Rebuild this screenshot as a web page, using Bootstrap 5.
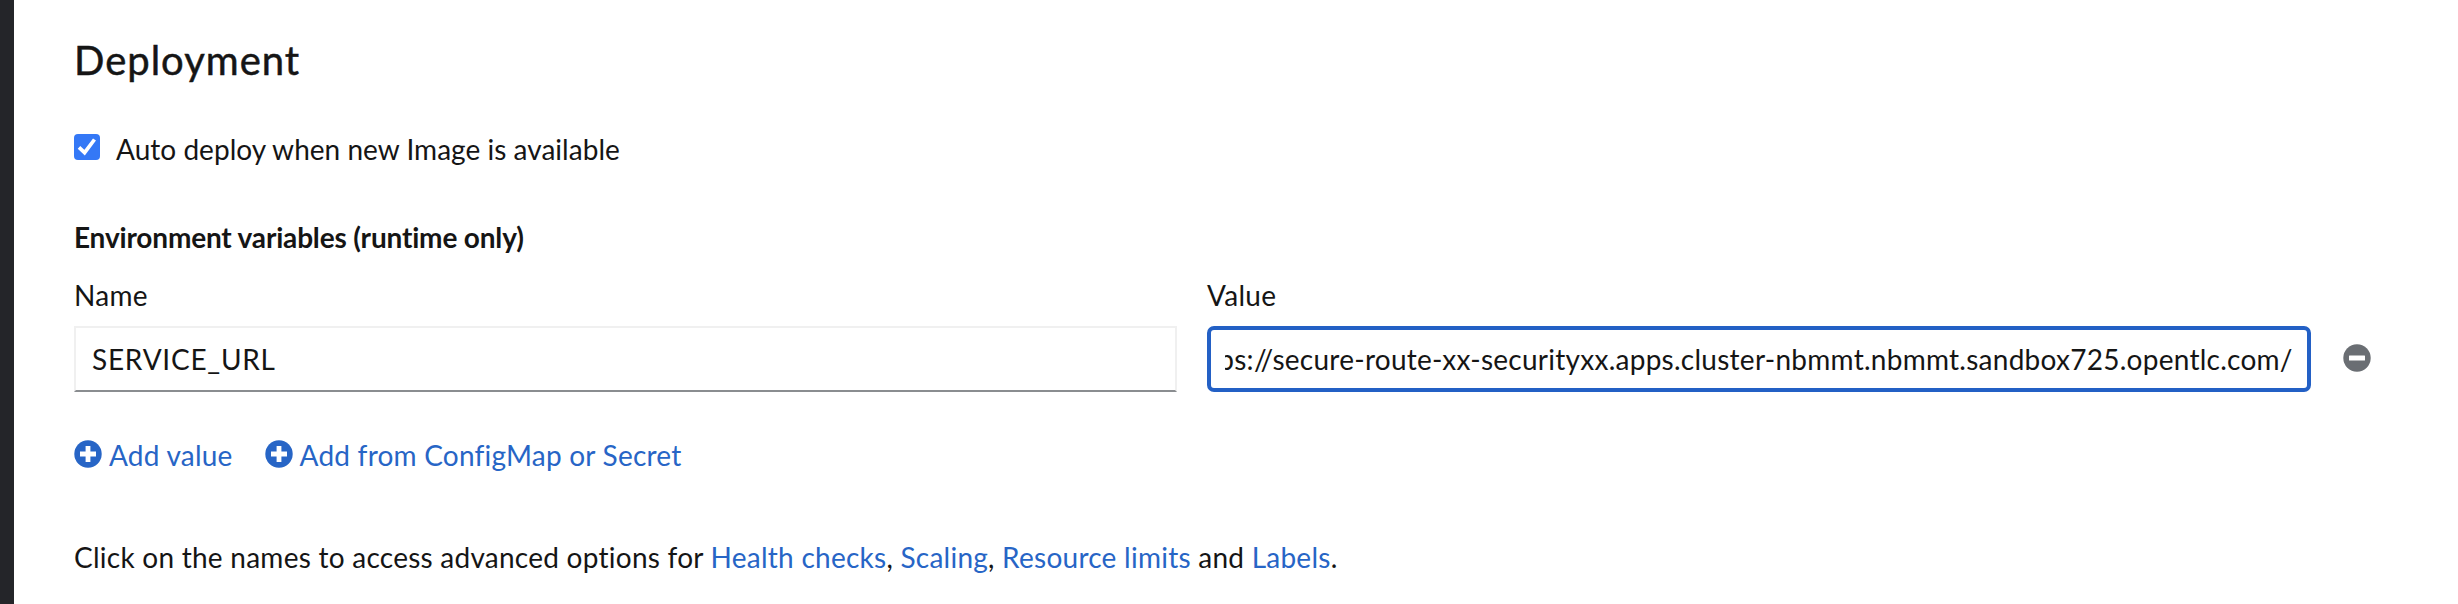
<!DOCTYPE html>
<html lang="en">
<head>
<meta charset="utf-8">
<title>Deployment</title>
<link href="https://cdn.jsdelivr.net/npm/bootstrap@5.3.0/dist/css/bootstrap.min.css" rel="stylesheet">
<style>
  body { font-family: Lato, "Open Sans", sans-serif; font-size: 28px; line-height: 42px; color: #151515; background: #fff; }
  .side-edge { width: 14px; background: #242529; }
  .form-area { padding: 34px 0 0 60px; }
  .page-title { font-size: 40px; line-height: 52px; font-weight: 400; letter-spacing: 1px; -webkit-text-stroke: .5px #151515; margin-bottom: 42px; }
  .auto-row { gap: 16px; margin-bottom: 46px; letter-spacing: .03px; }
  .auto-row .form-check-input { width: 26px; height: 26px; border-radius: 4px; margin: 6px 0 0; border: 0; float: none; }
  .auto-row .form-check-input:checked { background-color: #3478f6; background-size: 26px 26px; background-image: url("data:image/svg+xml,%3Csvg xmlns='http://www.w3.org/2000/svg' viewBox='0 0 26 26'%3E%3Cpath d='M5 13.4l5.6 5.3L20.5 5.5' fill='none' stroke='%23fff' stroke-width='3.7'/%3E%3C/svg%3E"); }
  .env-title { font-size: 28px; line-height: 42px; font-weight: 700; letter-spacing: -.17px; margin-bottom: 16px; }
  .env-grid { display: grid; grid-template-columns: 1103px 1104px auto; column-gap: 30px; margin-bottom: 42px; }
  .env-grid label { margin-bottom: 10px; letter-spacing: .3px; }
  .env-grid .form-control { height: 66px; padding: 11px 16px; font-size: 28px; line-height: 40px; color: #151515; border: 2px solid #f0f0f0; border-bottom-color: #8a8d90; border-radius: 0; box-shadow: none; }
  #env-name { letter-spacing: .75px; }
  .env-grid .is-active { border: 4px solid #2360c5; border-radius: 7px; padding: 9px 14px; letter-spacing: .26px; }
  .remove-btn { align-self: end; width: 28px; height: 28px; margin: 0 0 20px 2px; }
  .remove-btn svg, .action svg { display: block; width: 28px; height: 28px; flex: none; }
  .action { color: #2765c6; gap: 7px; letter-spacing: .22px; }
  .action svg { margin-top: -3px; }
  .actions { gap: 32px; margin-bottom: 60px; }
  .hint { letter-spacing: .25px; }
  .hint a { color: #2765c6; }
</style>
<script src="https://cdn.jsdelivr.net/npm/bootstrap@5.3.0/dist/js/bootstrap.bundle.min.js"></script>
</head>
<body class="vh-100 overflow-hidden">
<div class="d-flex h-100">
  <aside class="side-edge flex-shrink-0"></aside>
  <main class="form-area flex-grow-1">
    <h1 class="page-title">Deployment</h1>

    <div class="auto-row d-flex align-items-start">
      <input class="form-check-input" type="checkbox" id="auto" checked>
      <label for="auto">Auto deploy when new Image is available</label>
    </div>

    <h2 class="env-title">Environment variables (runtime only)</h2>
    <div class="env-grid">
      <div>
        <label class="d-block" for="env-name">Name</label>
        <input class="form-control" id="env-name" type="text" value="SERVICE_URL">
      </div>
      <div>
        <label class="d-block" for="env-value">Value</label>
        <input class="form-control is-active" id="env-value" type="text" spellcheck="false" value="https://secure-route-xx-securityxx.apps.cluster-nbmmt.nbmmt.sandbox725.opentlc.com/">
      </div>
      <button class="remove-btn border-0 bg-transparent p-0" type="button" aria-label="Remove">
        <svg viewBox="0 0 28 28"><circle cx="14" cy="14" r="13.7" fill="#6a6e73"/><rect x="6" y="11.6" width="16" height="5" rx=".5" fill="#fff"/></svg>
      </button>
    </div>

    <div class="actions d-flex">
      <a href="#" class="action d-flex align-items-center text-decoration-none">
        <svg viewBox="0 0 28 28"><circle cx="14" cy="14" r="13.7" fill="#2765c6"/><path d="M11.6 6h4.8v5.6H22v4.8h-5.6V22h-4.8v-5.6H6v-4.8h5.6z" fill="#fff"/></svg>
        <span>Add value</span>
      </a>
      <a href="#" class="action d-flex align-items-center text-decoration-none">
        <svg viewBox="0 0 28 28"><circle cx="14" cy="14" r="13.7" fill="#2765c6"/><path d="M11.6 6h4.8v5.6H22v4.8h-5.6V22h-4.8v-5.6H6v-4.8h5.6z" fill="#fff"/></svg>
        <span>Add from ConfigMap or Secret</span>
      </a>
    </div>

    <p class="hint mb-0">Click on the names to access advanced options for <a href="#" class="text-decoration-none">Health checks</a>, <a href="#" class="text-decoration-none">Scaling</a>, <a href="#" class="text-decoration-none">Resource limits</a> and <a href="#" class="text-decoration-none">Labels</a>.</p>
  </main>
</div>
<script>
  // Keep the end of the long URL in view
  const value = document.getElementById('env-value');
  value.scrollLeft = value.scrollWidth;
</script>
</body>
</html>
